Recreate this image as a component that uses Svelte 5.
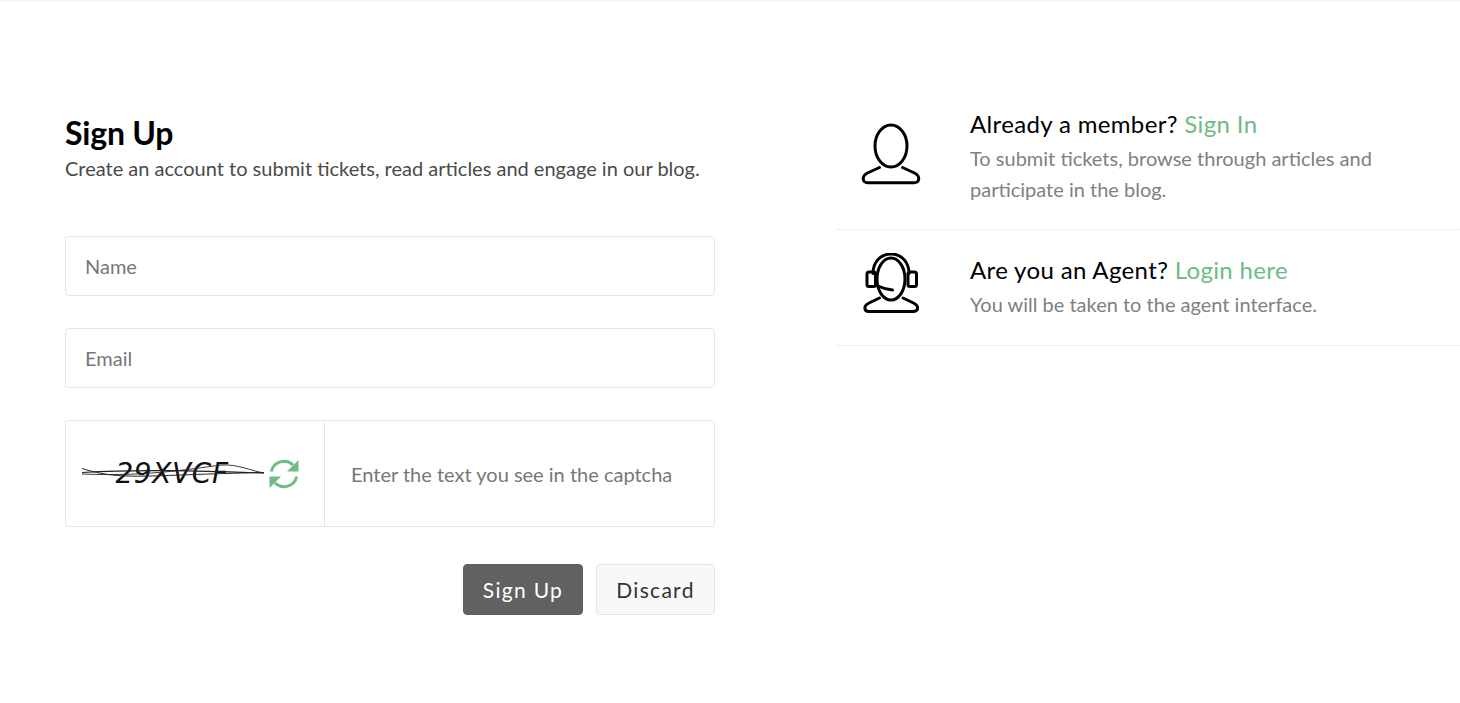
<script>
  const members = [
    { q: 'Already a member?', link: 'Sign In', kind: 'user', lines: 'To submit tickets, browse through articles and participate in the blog.' },
    { q: 'Are you an Agent?', link: 'Login here', kind: 'agent', lines: 'You will be taken to the agent interface.' }
  ];
</script>

<div class="top"></div>
<main class="page">
  <section class="form">
    <h1>Sign Up</h1>
    <p class="sub">Create an account to submit tickets, read articles and engage in our blog.</p>
    <div class="fields">
      <input class="field" placeholder="Name" />
      <input class="field" placeholder="Email" />
      <div class="captcha">
        <div class="cap-left">
          <div class="cap-img">
            <span class="cap-text">29XVCF</span>
            <svg class="cap-lines" width="182" height="30" viewBox="0 0 182 30" fill="none" stroke="#222">
              <path d="M0 9.5 C 40 22, 60 16, 182 13.5" stroke-width="1" />
              <path d="M0 13.5 C 60 10, 120 12, 182 14" stroke-width="1.2" />
              <path d="M0 15 C 70 18, 120 8, 140 6 C 155 5, 170 12, 182 14" stroke-width="0.9" />
            </svg>
          </div>
          <svg class="refresh" width="34" height="34" viewBox="0 0 34 34" fill="none">
            <path d="M4.3 14.5 A13 13 0 0 1 26 8" stroke="#6dbb85" stroke-width="3" />
            <path d="M29.7 19.5 A13 13 0 0 1 8 26" stroke="#6dbb85" stroke-width="3" />
            <path d="M31.5 3 V14.5 H20 Z M2.5 31 V19.5 H14 Z" fill="#6dbb85" />
          </svg>
        </div>
        <input class="cap-input" placeholder="Enter the text you see in the captcha" />
      </div>
    </div>
    <div class="actions">
      <button class="btn primary">Sign Up</button>
      <button class="btn ghost">Discard</button>
    </div>
  </section>

  <aside class="side">
    {#each members as m}
      <div class="item {m.kind}">
        <div class="icon">
          {#if m.kind === 'user'}
            <svg width="60" height="62" viewBox="0 0 60 62" fill="none" stroke="#000" stroke-width="3" stroke-linecap="round" stroke-linejoin="round">
              <ellipse cx="30" cy="23" rx="16" ry="21" />
              <path d="M18.5 44.5 L6.5 50 C0.5 53 1 59.7 7 59.7 H53 C59 59.7 59.5 53 53.5 50 L41.5 44.5" />
            </svg>
          {:else}
            <svg width="60" height="66" viewBox="0 0 60 66" fill="none" stroke="#000" stroke-width="3" stroke-linecap="round" stroke-linejoin="round">
              <ellipse cx="30" cy="26" rx="14" ry="21" />
              <path d="M12 19 C12 7 20 -0.5 30 -0.5 C40 -0.5 48 7 48 19" transform="translate(0 1.5)" />
              <rect x="6" y="19" width="8.5" height="14.5" rx="2" />
              <rect x="47" y="19" width="8.5" height="14.5" rx="2" />
              <path d="M17 33 C21 35 26 36.5 31.5 37" />
              <path d="M18.5 45 L8 50 C2 53 3 58.5 8 58.5 H52 C57.5 58.5 58.5 53 52.5 50 L42 45" />
            </svg>
          {/if}
        </div>
        <div class="copy">
          <h2>{m.q} <a href="#top">{m.link}</a></h2>
          <p>{m.lines}</p>
        </div>
      </div>
    {/each}
  </aside>
</main>

<style>
  :global(body) {
    margin: 0;
    background: #fff;
    font-family: Lato, "Liberation Sans", sans-serif;
  }
  .top { height: 2px; background: #f6f6f6; }
  .page {
    display: flex;
    align-items: flex-start;
    padding: 110px 0 0 65px;
    height: 591px;
  }
  .form { width: 650px; flex: none; }
  h1 {
    margin: 0;
    font-size: 32px;
    line-height: 42px;
    font-weight: 700;
    color: #000;
    letter-spacing: -0.2px;
  }
  .sub {
    margin: 0;
    padding-top: 1px;
    font-size: 20px;
    line-height: 26px;
    color: #4a4a4a;
  }
  .fields {
    margin-top: 55px;
    display: flex;
    flex-direction: column;
    gap: 32px;
  }
  .field, .captcha {
    box-sizing: border-box;
    width: 100%;
    border: 1px solid #e6e6e6;
    border-radius: 4px;
    background: #fff;
  }
  .field {
    height: 60px;
    padding: 0 19px;
    font: 20px Lato, sans-serif;
    color: #333;
    outline: none;
  }
  .field::placeholder, .cap-input::placeholder { color: #777; opacity: 1; }
  .captcha { display: flex; height: 107px; }
  .cap-left {
    width: 259px;
    flex: none;
    box-sizing: border-box;
    border-right: 1px solid #e6e6e6;
    display: flex;
    align-items: center;
    padding-left: 16px;
    gap: 3px;
  }
  .cap-img { position: relative; width: 182px; height: 30px; }
  .cap-text {
    display: block;
    text-align: center;
    font: italic 28px/30px "DejaVu Sans", sans-serif;
    color: #111;
    letter-spacing: 0.6px;
    margin-left: -2px;
  }
  .cap-lines { position: absolute; left: 0; top: 0; }
  .cap-input {
    flex: 1;
    min-width: 0;
    border: 0;
    outline: none;
    background: transparent;
    padding: 0 26px;
    font: 20px Lato, sans-serif;
  }
  .actions {
    margin-top: 37px;
    display: flex;
    justify-content: flex-end;
    gap: 13px;
  }
  .btn {
    height: 51px;
    border-radius: 4px;
    font: 21px Lato, sans-serif;
    letter-spacing: 1.3px;
    box-sizing: border-box;
    padding: 0;
  }
  .primary {
    width: 120px;
    background: #616161;
    border: 1px solid #616161;
    color: #fff;
  }
  .ghost {
    width: 119px;
    background: #f8f8f8;
    border: 1px solid #e3e6e6;
    color: #333;
  }
  .side { margin-left: 121px; flex: 1; margin-top: -3px; }
  .item {
    display: flex;
    border-bottom: 1px solid #f0f0f0;
  }
  .item.user { height: 120px; border-bottom: 1px dotted #e6e6e6; }
  .item.agent { height: 115px; }
  .icon { width: 134px; flex: none; padding-left: 25px; box-sizing: border-box; }
  .item.user .icon { padding-top: 14px; }
  .item.agent .icon { padding-top: 23px; }
  .copy { width: 420px; }
  .item.user .copy { padding-top: 0; }
  .item.agent .copy { padding-top: 25px; }
  h2 {
    margin: 0;
    font-size: 24px;
    line-height: 30px;
    font-weight: 400;
    color: #000;
    letter-spacing: 0.35px;
  }
  h2 a { color: #6dbb85; text-decoration: none; }
  .copy p {
    margin: 4px 0 0;
    font-size: 20px;
    line-height: 31px;
    color: #808080;
  }
</style>
